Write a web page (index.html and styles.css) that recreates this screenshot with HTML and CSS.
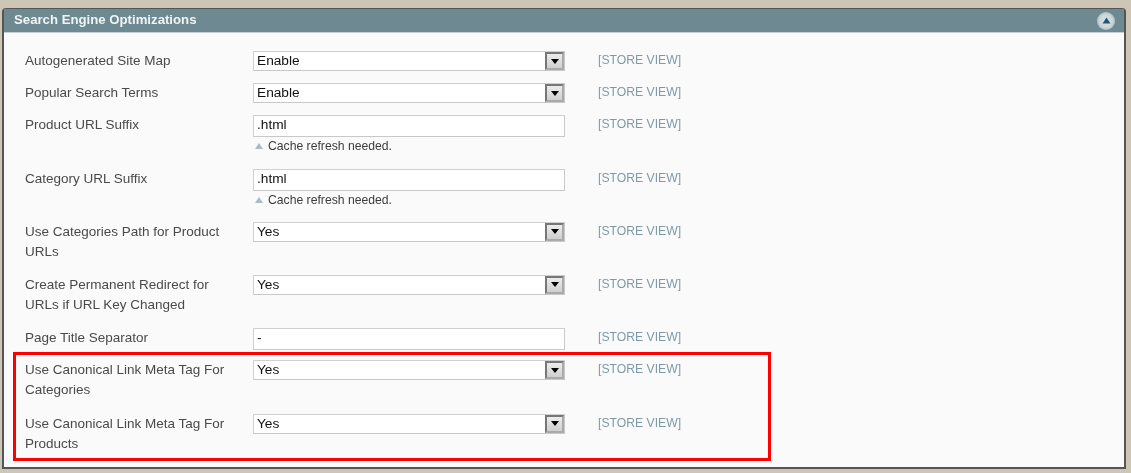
FILE: index.html
```html
<!DOCTYPE html>
<html lang="en">
<head>
<meta charset="utf-8">
<title>Search Engine Optimizations</title>
<link rel="stylesheet" href="styles.css">
</head>
<body>
<section class="panel">
  <header class="panel-head">
    <h2 class="panel-title">Search Engine Optimizations</h2>
    <span class="collapse"><svg width="9" height="7" viewBox="0 0 10 8"><path d="M5 0.5 L9.5 7.5 L0.5 7.5 Z" fill="#2a5568"/></svg></span>
  </header>
  <div class="panel-body">
    <div class="row h32">
      <div class="label">Autogenerated Site Map</div>
      <div class="field"><div class="select"><span class="value">Enable</span><span class="btn"><i class="arrow"></i></span></div></div>
      <div class="scope">[STORE VIEW]</div>
    </div>
    <div class="row h32">
      <div class="label">Popular Search Terms</div>
      <div class="field"><div class="select"><span class="value">Enable</span><span class="btn"><i class="arrow"></i></span></div></div>
      <div class="scope">[STORE VIEW]</div>
    </div>
    <div class="row h53">
      <div class="label">Product URL Suffix</div>
      <div class="field"><div class="input">.html</div><p class="note"><i class="tri"></i>Cache refresh needed.</p></div>
      <div class="scope">[STORE VIEW]</div>
    </div>
    <div class="row h53">
      <div class="label">Category URL Suffix</div>
      <div class="field"><div class="input">.html</div><p class="note"><i class="tri"></i>Cache refresh needed.</p></div>
      <div class="scope">[STORE VIEW]</div>
    </div>
    <div class="row h53">
      <div class="label">Use Categories Path for Product URLs</div>
      <div class="field"><div class="select"><span class="value">Yes</span><span class="btn"><i class="arrow"></i></span></div></div>
      <div class="scope">[STORE VIEW]</div>
    </div>
    <div class="row h53">
      <div class="label">Create Permanent Redirect for URLs if URL Key Changed</div>
      <div class="field"><div class="select"><span class="value">Yes</span><span class="btn"><i class="arrow"></i></span></div></div>
      <div class="scope">[STORE VIEW]</div>
    </div>
    <div class="row h32">
      <div class="label">Page Title Separator</div>
      <div class="field"><div class="input">-</div></div>
      <div class="scope">[STORE VIEW]</div>
    </div>
    <div class="row h53">
      <div class="label">Use Canonical Link Meta Tag For Categories</div>
      <div class="field"><div class="select"><span class="value">Yes</span><span class="btn"><i class="arrow"></i></span></div></div>
      <div class="scope">[STORE VIEW]</div>
    </div>
    <div class="row h53">
      <div class="label">Use Canonical Link Meta Tag For Products</div>
      <div class="field"><div class="select"><span class="value">Yes</span><span class="btn"><i class="arrow"></i></span></div></div>
      <div class="scope">[STORE VIEW]</div>
    </div>
    <div class="highlight"></div>
  </div>
</section>
</body>
</html>
```
FILE: styles.css
```css
* { box-sizing: border-box; }
html, body { height: 100%; }
body {
  margin: 0;
  background: #cdc6b6;
  font-family: "Liberation Sans", Arial, sans-serif;
  font-size: 13.5px;
  color: #4a4a4a;
  padding: 8px 5px 4px 2px;
  overflow: hidden;
}
.panel {
  position: relative;
  height: 461px;
  border: 1px solid #555;
  border-width: 1px 2px 2px 2px;
  border-radius: 4px 4px 0 0;
  background: #fafafa;
  filter: blur(0.5px);
}
.panel-head {
  height: 24px;
  background: #6f8992;
  border-bottom: 1px solid #c4d0d4;
  display: flex;
  align-items: center;
  justify-content: space-between;
  padding: 0 9px 0 10px;
}
.panel-title {
  margin: 0 0 2px;
  font-size: 13.2px;
  font-weight: 700;
  color: #f0f4f5;
}
.collapse {
  width: 18px;
  height: 18px;
  border-radius: 50%;
  background: radial-gradient(circle, #dbe5e8 0, #c9d7db 50%, #8aa2aa 100%);
  display: flex;
  align-items: center;
  justify-content: center;
}
.panel-body {
  position: relative;
  padding: 18px 0 0 21px;
}
.row {
  display: grid;
  grid-template-columns: 228px 345px 1fr;
  align-items: start;
}
.h32 { height: 32.2px; }
.h53 { height: 53.2px; }
.label {
  width: 200px;
  line-height: 20px;
}
.select, .input {
  width: 312px;
  height: 20px;
  border: 1px solid #c8c8c8;
  border-color: #d0d0d0 #c8c8c8 #c8c8c8 #d0d0d0;
  background: #fff;
  color: #111;
  font-size: 13.7px;
  line-height: 17px;
}
.select {
  display: flex;
  justify-content: space-between;
}
.value { padding-left: 3px; }
.input { padding-left: 3px; height: 22px; line-height: 18px; }
.btn {
  width: 19px;
  height: 18px;
  background: linear-gradient(#ececec, #cfcfcf);
  border: 2px solid #777;
  border-right-color: #aaa;
  border-bottom-color: #aaa;
  display: flex;
  align-items: center;
  justify-content: center;
}
.arrow {
  width: 0;
  height: 0;
  border-left: 4px solid transparent;
  border-right: 4px solid transparent;
  border-top: 5px solid #000;
}
.note {
  margin: 1px 0 0;
  font-size: 12.2px;
  line-height: 16px;
  color: #3c3c3c;
  display: flex;
  align-items: center;
}
.tri {
  width: 0;
  height: 0;
  margin: 0 5px 0 2px;
  border-left: 4px solid transparent;
  border-right: 4px solid transparent;
  border-bottom: 6px solid #a9bcc2;
}
.scope {
  font-size: 12.2px;
  line-height: 18px;
  color: #7f99a7;
}
.highlight {
  position: absolute;
  left: 9px;
  top: 319px;
  width: 758px;
  height: 109px;
  border: 3px solid #f00;
  pointer-events: none;
}
```
